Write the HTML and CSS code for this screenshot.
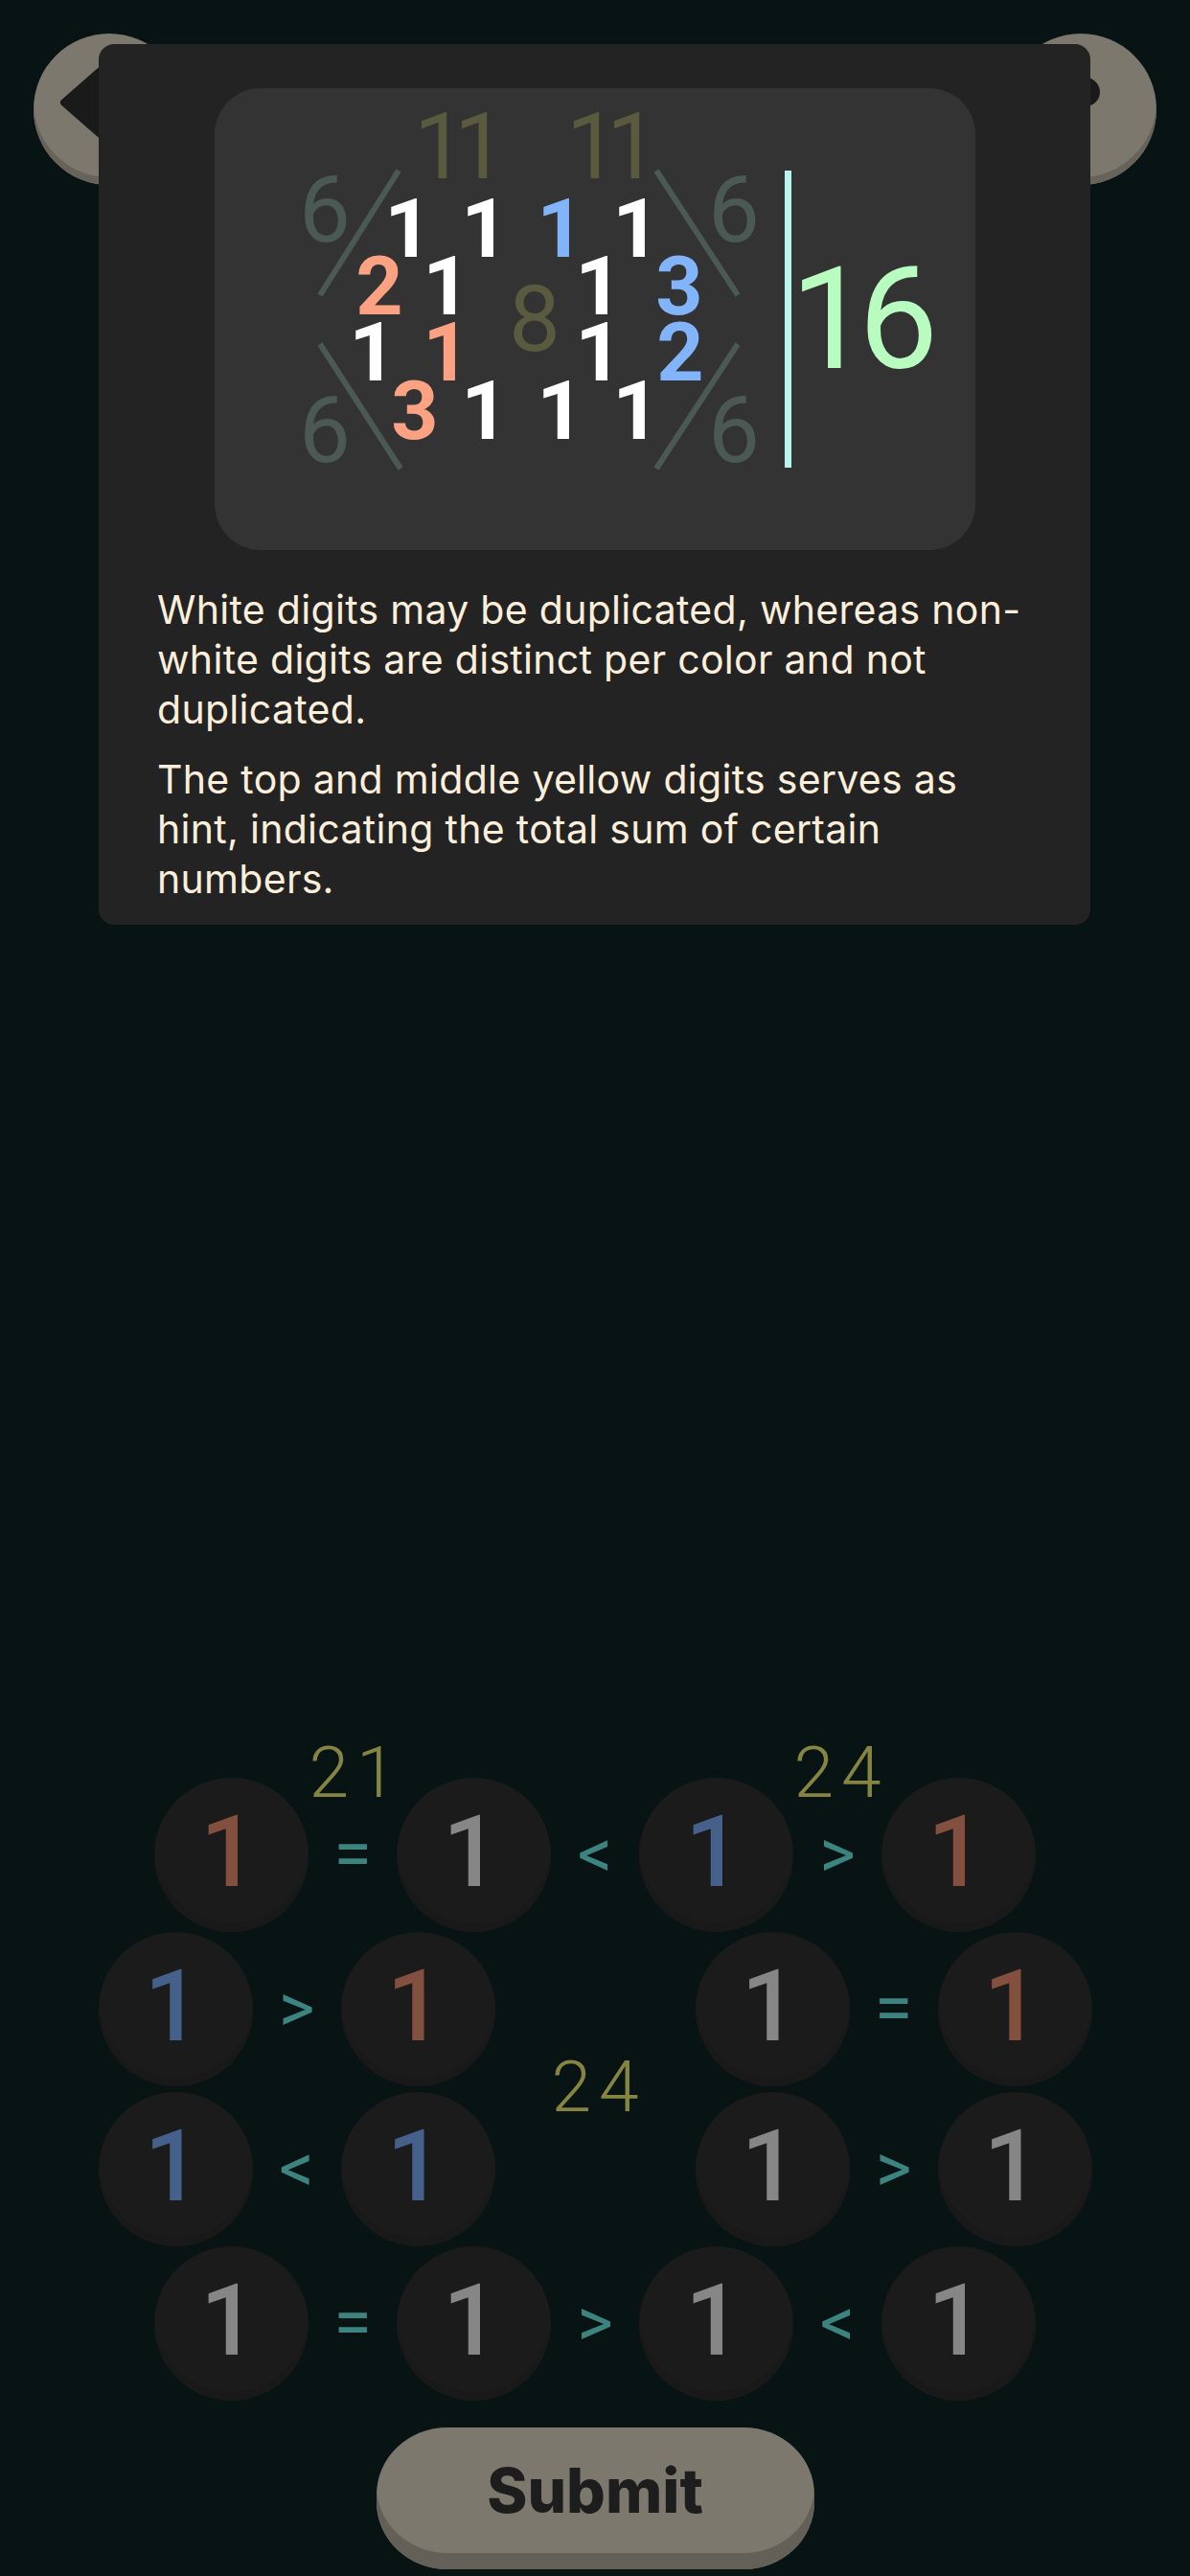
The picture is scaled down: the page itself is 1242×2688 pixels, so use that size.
FILE: index.html
```html
<!DOCTYPE html>
<html lang="en">
<head>
<meta charset="utf-8">
<title>Puzzle</title>
<link rel="stylesheet" href="styles.css">
</head>
<body>
<div class="screen">
  <header class="topbar">
    <button class="round-btn" aria-label="Back">
      <svg class="btn-icon" viewBox="0 0 158 158" width="158" height="158">
        <path class="icon-fill" d="M32 72 L96 16 L96 128 Z"/>
      </svg>
    </button>
    <button class="round-btn" aria-label="Help">
      <svg class="btn-icon" viewBox="0 0 158 158" width="158" height="158">
        <circle class="icon-dot" cx="84" cy="61" r="15"/>
      </svg>
    </button>
  </header>

  <main class="board">
    <div class="row">
      <div class="cell"><span class="digit red">1</span></div>
      <div class="op">=<span class="hint top-hint">21</span></div>
      <div class="cell"><span class="digit white">1</span></div>
      <div class="op">&lt;</div>
      <div class="cell"><span class="digit blue">1</span></div>
      <div class="op">&gt;<span class="hint top-hint">24</span></div>
      <div class="cell"><span class="digit red">1</span></div>
    </div>
    <div class="row">
      <div class="cell"><span class="digit blue">1</span></div>
      <div class="op">&gt;</div>
      <div class="cell"><span class="digit red">1</span></div>
      <div class="spacer"></div>
      <div class="cell"><span class="digit white">1</span></div>
      <div class="op">=</div>
      <div class="cell"><span class="digit red">1</span></div>
    </div>
    <div class="mid-gap"><span class="hint mid-hint">24</span></div>
    <div class="row">
      <div class="cell"><span class="digit blue">1</span></div>
      <div class="op">&lt;</div>
      <div class="cell"><span class="digit blue">1</span></div>
      <div class="spacer"></div>
      <div class="cell"><span class="digit white">1</span></div>
      <div class="op">&gt;</div>
      <div class="cell"><span class="digit white">1</span></div>
    </div>
    <div class="row">
      <div class="cell"><span class="digit white">1</span></div>
      <div class="op">=</div>
      <div class="cell"><span class="digit white">1</span></div>
      <div class="op">&gt;</div>
      <div class="cell"><span class="digit white">1</span></div>
      <div class="op">&lt;</div>
      <div class="cell"><span class="digit white">1</span></div>
    </div>
  </main>

  <div class="submit-wrap">
    <button class="submit">Submit</button>
  </div>

  <div class="modal">
    <div class="diagram">
      <svg viewBox="0 0 794 482" width="794" height="482">
        <g class="edge">
          <line x1="192" y1="86" x2="110" y2="216"/>
          <line x1="110" y1="267" x2="194" y2="397"/>
          <line x1="461" y1="86" x2="546" y2="216"/>
          <line x1="546" y1="267" x2="461" y2="397"/>
        </g>
        <text class="t-hint" x="250" y="94">11</text>
        <text class="t-hint" x="409" y="94">11</text>
        <text class="t-side" x="115" y="160">6</text>
        <text class="t-side" x="115" y="390">6</text>
        <text class="t-side" x="542" y="160">6</text>
        <text class="t-side" x="542" y="390">6</text>
        <text class="t-hint" x="328" y="274">8</text>

        <text class="t-d w" x="202" y="176">1</text>
        <text class="t-d w" x="282" y="176">1</text>
        <text class="t-d b" x="361" y="176">1</text>
        <text class="t-d w" x="440" y="176">1</text>

        <text class="t-d r" x="172" y="236">2</text>
        <text class="t-d w" x="242" y="236">1</text>
        <text class="t-d w" x="401" y="236">1</text>
        <text class="t-d b" x="485" y="236">3</text>

        <text class="t-d w" x="165" y="305">1</text>
        <text class="t-d r" x="242" y="305">1</text>
        <text class="t-d w" x="401" y="305">1</text>
        <text class="t-d b" x="486" y="305">2</text>

        <text class="t-d r" x="209" y="366">3</text>
        <text class="t-d w" x="282" y="366">1</text>
        <text class="t-d w" x="361" y="366">1</text>
        <text class="t-d w" x="440" y="366">1</text>

        <rect class="divider" x="595" y="86" width="7" height="310"/>
        <text class="t-sum" x="672" y="292">16</text>
      </svg>
    </div>
    <div class="rules">
      <p>White digits may be duplicated, whereas non-white digits are distinct per color and not duplicated.</p>
      <p>The top and middle yellow digits serves as hint, indicating the total sum of certain numbers.</p>
    </div>
  </div>
</div>
</body>
</html>
```

FILE: styles.css
```css
html, body {
  margin: 0;
  padding: 0;
  background: #081313;
}

.screen {
  position: relative;
  width: 1242px;
  height: 2688px;
  overflow: hidden;
  display: flex;
  flex-direction: column;
  background: #081313;
  font-family: "Roboto", "Liberation Sans", sans-serif;
}

/* top bar */
.topbar {
  display: flex;
  justify-content: space-between;
  padding: 35px 35px 0;
}

.round-btn {
  width: 158px;
  height: 158px;
  padding: 0;
  border: none;
  border-radius: 50%;
  background: #7d786d;
  box-shadow: inset 0 -8px 0 #67635a;
  display: block;
}

.btn-icon {
  display: block;
}

.icon-fill {
  fill: #1a1a1a;
  stroke: #1a1a1a;
  stroke-width: 8;
  stroke-linejoin: round;
}

.icon-dot {
  fill: #1a1a1a;
}

/* board */
.board {
  margin-top: auto;
  display: flex;
  flex-direction: column;
  align-items: center;
  gap: 1px;
}

.row {
  display: flex;
  align-items: center;
  height: 160px;
}

.cell {
  width: 161px;
  height: 161px;
  border-radius: 50%;
  background: #1b1b1b;
  box-shadow: inset 0 -9px 0 #191919;
  display: flex;
  align-items: center;
  justify-content: center;
}

.digit {
  font-size: 104px;
  font-weight: 500;
  line-height: 1;
  margin-top: -4px;
  margin-left: -6px;
}

.digit.red { color: #83503f; }
.digit.white { color: #868686; }
.digit.blue { color: #45608a; }

.op {
  position: relative;
  width: 92px;
  height: 160px;
  display: flex;
  align-items: center;
  justify-content: center;
  color: #3c8480;
  font-size: 72px;
  font-weight: 400;
  line-height: 1;
}

.spacer {
  width: 209px;
}

.hint {
  position: absolute;
  left: 50%;
  transform: translateX(calc(-50% + 4px));
  color: #858541;
  font-family: "Roboto", "Liberation Sans", sans-serif;
  font-weight: 300;
  font-size: 75px;
  letter-spacing: 8px;
  line-height: 1;
  white-space: nowrap;
}

.top-hint {
  top: -43px;
}

.mid-gap {
  position: relative;
  width: 100%;
  height: 5px;
}

.mid-hint {
  top: -37px;
}

/* submit */
.submit-wrap {
  display: flex;
  justify-content: center;
  padding: 29px 0 7px;
}

.submit {
  width: 457px;
  height: 148px;
  border: none;
  border-radius: 74px / 70px;
  background: #7d786d;
  box-shadow: inset 0 -17px 0 #636057;
  color: #1d1d1d;
  font-family: "Inter", "Roboto", sans-serif;
  font-weight: 800;
  font-size: 64px;
  padding: 0 0 17px;
  line-height: 1;
}

/* modal */
.modal {
  position: absolute;
  top: 46px;
  left: 103px;
  width: 1035px;
  height: 919px;
  box-sizing: border-box;
  background: #232323;
  border-radius: 16px;
  padding: 46px 61px 0;
}

.diagram {
  width: 794px;
  height: 482px;
  margin: 0 auto;
  background: #333333;
  border-radius: 48px;
}

.diagram svg {
  display: block;
}

.edge line {
  stroke: #4b5955;
  stroke-width: 6;
}

.t-hint {
  fill: #5a5a3e;
  font-family: "Roboto", sans-serif;
  font-size: 96px;
  font-weight: 400;
  text-anchor: middle;
  letter-spacing: -12px;
}

.t-side {
  fill: #4b5955;
  font-family: "Roboto", sans-serif;
  font-size: 96px;
  font-weight: 400;
  text-anchor: middle;
}

.t-d {
  font-family: "Roboto", sans-serif;
  font-size: 86px;
  font-weight: 700;
  text-anchor: middle;
}

.t-d.w { fill: #ffffff; }
.t-d.r { fill: #fca283; }
.t-d.b { fill: #82b4fc; }

.divider {
  fill: #b8f5ef;
}

.t-sum {
  fill: #b9fcc0;
  font-family: "Roboto", sans-serif;
  font-size: 148px;
  font-weight: 400;
  text-anchor: middle;
  letter-spacing: -12px;
}

.rules {
  margin-top: 36px;
  color: #fbeedb;
  font-family: "Inter", "Roboto", sans-serif;
  font-size: 41px;
  letter-spacing: 0.3px;
  line-height: 52px;
}

.rules p {
  margin: 0 0 21px;
}
```
